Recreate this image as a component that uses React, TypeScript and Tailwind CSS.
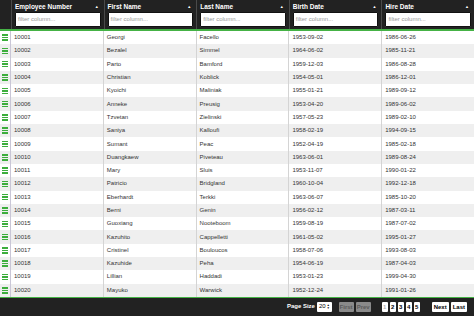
import React from "react";

type Employee = {
  id: string;
  first: string;
  last: string;
  birth: string;
  hire: string;
};

const EMPLOYEES: Employee[] = [
  { id: "10001", first: "Georgi", last: "Facello", birth: "1953-09-02", hire: "1986-06-26" },
  { id: "10002", first: "Bezalel", last: "Simmel", birth: "1964-06-02", hire: "1985-11-21" },
  { id: "10003", first: "Parto", last: "Bamford", birth: "1959-12-03", hire: "1986-08-28" },
  { id: "10004", first: "Christian", last: "Koblick", birth: "1954-05-01", hire: "1986-12-01" },
  { id: "10005", first: "Kyoichi", last: "Maliniak", birth: "1955-01-21", hire: "1989-09-12" },
  { id: "10006", first: "Anneke", last: "Preusig", birth: "1953-04-20", hire: "1989-06-02" },
  { id: "10007", first: "Tzvetan", last: "Zielinski", birth: "1957-05-23", hire: "1989-02-10" },
  { id: "10008", first: "Saniya", last: "Kalloufi", birth: "1958-02-19", hire: "1994-09-15" },
  { id: "10009", first: "Sumant", last: "Peac", birth: "1952-04-19", hire: "1985-02-18" },
  { id: "10010", first: "Duangkaew", last: "Piveteau", birth: "1963-06-01", hire: "1989-08-24" },
  { id: "10011", first: "Mary", last: "Sluis", birth: "1953-11-07", hire: "1990-01-22" },
  { id: "10012", first: "Patricio", last: "Bridgland", birth: "1960-10-04", hire: "1992-12-18" },
  { id: "10013", first: "Eberhardt", last: "Terkki", birth: "1963-06-07", hire: "1985-10-20" },
  { id: "10014", first: "Berni", last: "Genin", birth: "1956-02-12", hire: "1987-03-11" },
  { id: "10015", first: "Guoxiang", last: "Nooteboom", birth: "1959-08-19", hire: "1987-07-02" },
  { id: "10016", first: "Kazuhito", last: "Cappelletti", birth: "1961-05-02", hire: "1995-01-27" },
  { id: "10017", first: "Cristinel", last: "Bouloucos", birth: "1958-07-06", hire: "1993-08-03" },
  { id: "10018", first: "Kazuhide", last: "Peha", birth: "1954-06-19", hire: "1987-04-03" },
  { id: "10019", first: "Lillian", last: "Haddadi", birth: "1953-01-23", hire: "1999-04-30" },
  { id: "10020", first: "Mayuko", last: "Warwick", birth: "1952-12-24", hire: "1991-01-26" },
];

const COLUMNS = ["Employee Number", "First Name", "Last Name", "Birth Date", "Hire Date"];

function RowHandle() {
  return (
    <div className="w-[11px] flex-shrink-0 flex flex-col items-center justify-center gap-[1px] border-r border-[#c9c6d6]">
      <span className="block w-[6px] h-[1.5px] bg-[#3cae3c]" />
      <span className="block w-[6px] h-[1.5px] bg-[#3cae3c]" />
      <span className="block w-[6px] h-[1.5px] bg-[#3cae3c]" />
    </div>
  );
}

function HeaderCell({ title }: { title: string }) {
  return (
    <div className="flex-1 min-w-0 flex flex-col border-l border-[#4a4a4a] px-[3px] pt-[3px]">
      <div className="flex items-center justify-between h-[8px] text-[6.5px] font-bold text-white leading-none">
        <span>{title}</span>
        <span className="text-[4px] mr-[2px]">▲</span>
      </div>
      <div className="mt-[1px] h-[15px] bg-white border border-[#111] rounded-[1px] flex items-center px-[2px] text-[6px] text-[#9a9a9a]">
        filter column...
      </div>
    </div>
  );
}

function PageButton({
  label,
  variant,
}: {
  label: string;
  variant: "disabled" | "current" | "normal" | "num";
}) {
  const cls =
    variant === "disabled"
      ? "bg-[#8a8a8a] text-[#5a5a5a] px-[1px]"
      : variant === "current"
      ? "bg-white text-[#b0b0b0] w-[6px]"
      : variant === "num"
      ? "bg-white text-black w-[6px]"
      : "bg-white text-black px-[2px]";
  return (
    <span
      className={`h-[10px] flex items-center justify-center rounded-[1px] text-[6px] font-bold leading-none ${cls}`}
    >
      {label}
    </span>
  );
}

export default function App() {
  return (
    <div
      className="w-[474px] h-[316px] overflow-hidden bg-white flex flex-col"
      style={{ fontFamily: '"Liberation Sans", Arial, sans-serif' }}
    >
      <div className="h-[29px] flex bg-[#222222]">
        <div className="w-[11px] flex-shrink-0" />
        {COLUMNS.map((c) => (
          <HeaderCell key={c} title={c} />
        ))}
      </div>
      <div className="h-[2px] bg-[#45b245]" />

      <div className="flex flex-col">
        {EMPLOYEES.map((e, i) => (
          <div
            key={e.id}
            className={`h-[13.3px] flex text-[6px] text-[#333] ${
              i % 2 === 0 ? "bg-white" : "bg-[#efefef]"
            }`}
          >
            <RowHandle />
            {[e.id, e.first, e.last, e.birth, e.hire].map((v, j) => (
              <div
                key={j}
                className={`flex-1 min-w-0 flex items-center px-[3px] ${
                  j > 0 ? "border-l border-[#d4d4d4]" : ""
                }`}
              >
                {v}
              </div>
            ))}
          </div>
        ))}
      </div>

      <div className="h-[1px] bg-[#45b245]" />
      <div className="flex-1 bg-[#222222] flex items-center justify-end pr-[7px] gap-[2px]">
        <span className="text-[6px] font-bold text-white">Page Size</span>
        <span className="h-[10px] bg-white rounded-[1px] flex items-center px-[2px] gap-[1px] text-[6px] text-black mr-[5px]">
          20
          <span className="flex flex-col text-[3px] leading-[3px]">
            <span>▲</span>
            <span>▼</span>
          </span>
        </span>
        <PageButton label="First" variant="disabled" />
        <PageButton label="Prev" variant="disabled" />
        <span className="w-[7px]" />
        <PageButton label="1" variant="current" />
        <PageButton label="2" variant="num" />
        <PageButton label="3" variant="num" />
        <PageButton label="4" variant="num" />
        <PageButton label="5" variant="num" />
        <span className="w-[8px]" />
        <PageButton label="Next" variant="normal" />
        <PageButton label="Last" variant="normal" />
      </div>
    </div>
  );
}
